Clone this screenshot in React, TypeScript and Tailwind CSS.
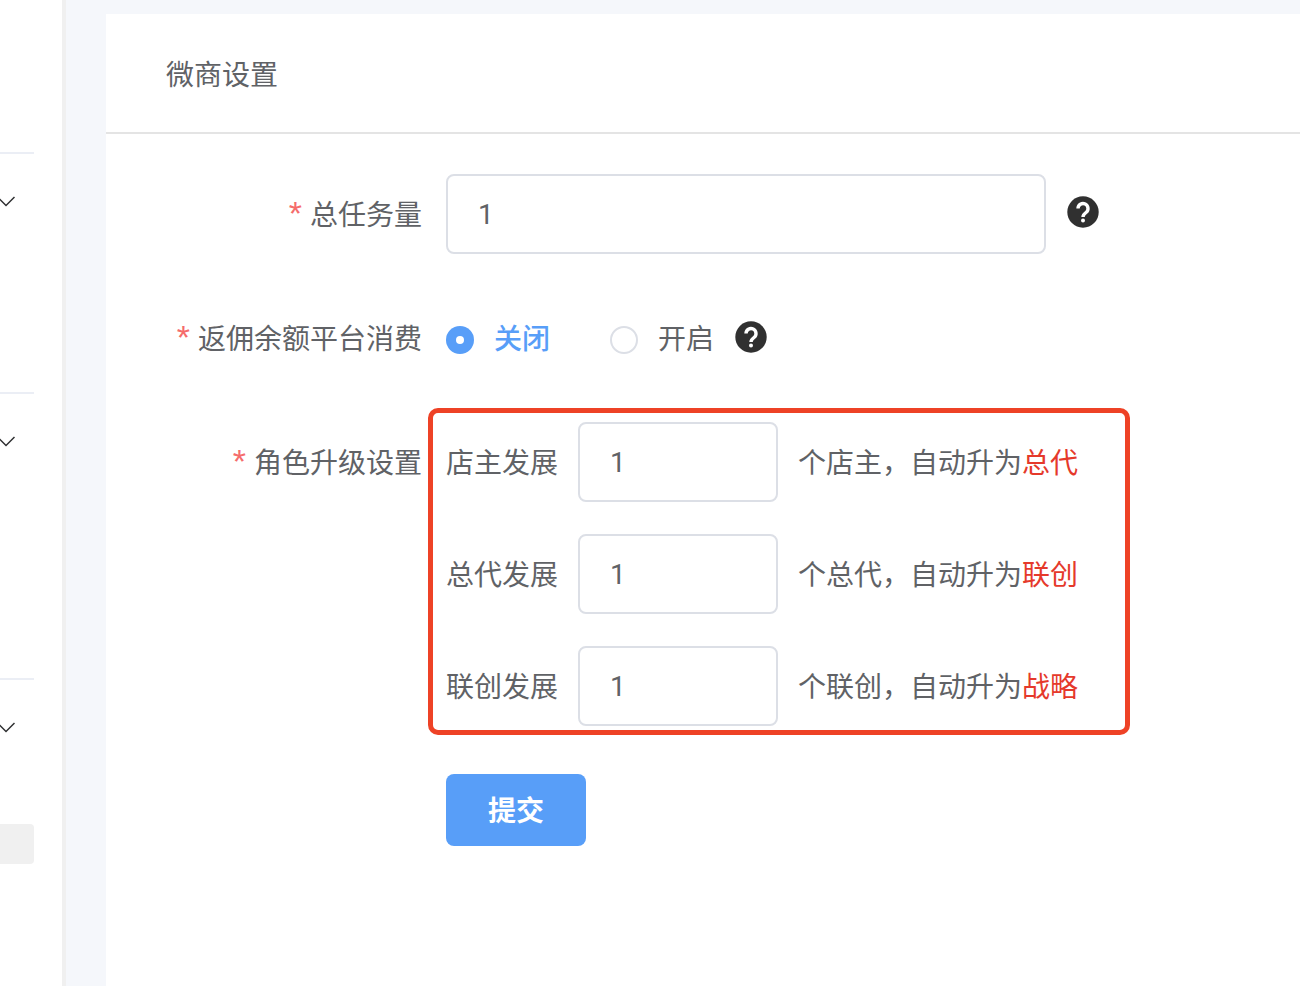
import React from 'react';

const upgrades = [
  { label: '店主发展', prefix: '个店主，自动升为', target: '总代' },
  { label: '总代发展', prefix: '个总代，自动升为', target: '联创' },
  { label: '联创发展', prefix: '个联创，自动升为', target: '战略' },
];

const Chevron = () => (
  <div className="flex justify-end pr-[19px]">
    <svg className="shrink-0" width="18" height="11" viewBox="0 0 18 11" fill="none" stroke="#303133" strokeWidth="1.5">
      <polyline points="1,1.5 9,9.5 17.5,1" />
    </svg>
  </div>
);

const Help = ({ className }: { className: string }) => (
  <svg className={className} width="32" height="32" viewBox="0 0 32 32">
    <circle cx="16" cy="16" r="15.7" fill="#303030" />
    <path d="M11 12.5a5 5 0 1 1 8 4c-2 1.5-3 2.3-3 4.5" fill="none" stroke="#fff" strokeWidth="3.4" />
    <circle cx="16" cy="24.5" r="2" fill="#fff" />
  </svg>
);

const Label = ({ text }: { text: string }) => (
  <div className="w-[316px] shrink-0 h-20 leading-[84px] text-right text-[#606266]">
    <span className="text-[34px] leading-[0] text-[#f56c6c] mr-2">*</span>
    {text}
  </div>
);

const App: React.FC = () => {
  return (
    <div
      className="flex h-[986px] w-[1300px] overflow-hidden bg-[#f5f7fb] text-[28px] text-[#606266]"
      style={{ fontFamily: '"Liberation Sans", "Noto Sans CJK SC", sans-serif' }}
    >
      {/* Sidebar */}
      <aside className="w-[66px] shrink-0 bg-white border-r-4 border-[#f0f0f0]">
        <div className="w-[34px] overflow-hidden pt-[152px]">
          <div className="h-[240px] border-t-2 border-[#ebeef5] pt-[42px]">
            <Chevron />
          </div>
          <div className="h-[286px] border-t-2 border-[#ebeef5] pt-[42px]">
            <Chevron />
          </div>
          <div className="h-[146px] border-t-2 border-[#ebeef5] pt-[42px]">
            <Chevron />
          </div>
          <div className="h-10 rounded-r bg-[#f0f0f0]"></div>
        </div>
      </aside>

      {/* Main */}
      <main className="ml-[40px] mt-[14px] flex-1 bg-white">
        <div className="h-[120px] border-b-2 border-[#e4e4e4] pl-[60px] leading-[124px]">微商设置</div>

        <div className="pt-10">
          <div className="flex mb-[44px]">
            <Label text="总任务量" />
            <div className="ml-6 h-20 w-[600px] rounded-lg border-2 border-[#dcdfe6] pl-[30px] font-['Roboto'] leading-[78px]">1</div>
            <Help className="ml-[21px] mt-[22px]" />
          </div>

          <div className="flex mb-[44px]">
            <Label text="返佣余额平台消费" />
            <div className="ml-6 flex h-20 items-center pt-1">
              <span className="flex h-7 w-7 items-center justify-center rounded-full bg-[#589ef8]">
                <span className="h-2 w-2 rounded-full bg-white"></span>
              </span>
              <span className="ml-5 font-medium text-[#589ef8]">关闭</span>
              <span className="ml-[60px] h-7 w-7 rounded-full border-2 border-[#dcdfe6]"></span>
              <span className="ml-5">开启</span>
              <Help className="ml-[21px] mb-[6px]" />
            </div>
          </div>

          <div className="flex">
            <Label text="角色升级设置" />
            <div className="relative ml-6 flex flex-col gap-8">
              {upgrades.map((row) => (
                <div key={row.label} className="flex h-20 items-center">
                  <span className="w-[132px] pt-1">{row.label}</span>
                  <div className="h-20 w-[200px] rounded-lg border-2 border-[#dcdfe6] pl-[30px] font-['Roboto'] leading-[78px]">1</div>
                  <span className="ml-5 pt-1">
                    {row.prefix}
                    <span className="text-[#e5392b]">{row.target}</span>
                  </span>
                </div>
              ))}
              {/* Red annotation frame */}
              <div className="absolute left-[-18px] top-[-14px] h-[327px] w-[702px] rounded-[10px] border-[5px] border-[#ee4226]"></div>
            </div>
          </div>

          <button className="ml-[340px] mt-12 block h-[72px] w-[140px] rounded-lg bg-[#589ef8] pt-1 font-bold text-white">提交</button>
        </div>
      </main>
    </div>
  );
};

export default App;
